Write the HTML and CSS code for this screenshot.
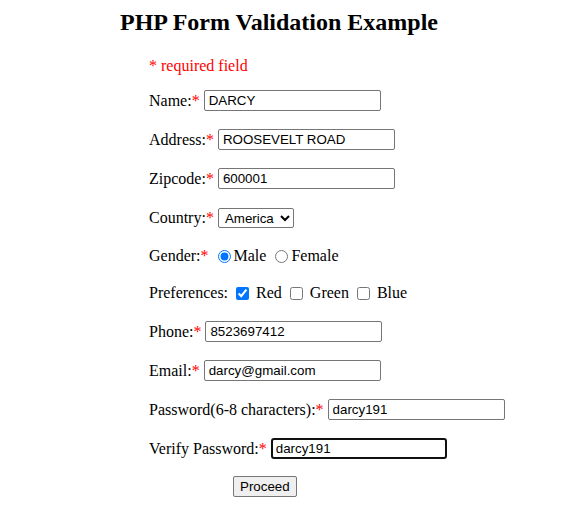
FILE: index.html
```html
<!DOCTYPE html>
<html>
<head>
<meta charset="utf-8">
<title>PHP Form Validation Example</title>
<link rel="stylesheet" href="styles.css">
</head>
<body>
<h2 class="title">PHP Form Validation Example</h2>
<form class="form">
  <p class="note"><span class="err">* required field</span></p>
  <div class="row row-first">Name:<span class="err">*</span> <input class="field" type="text" value="DARCY"></div>
  <div class="row">Address:<span class="err">*</span> <input class="field" type="text" value="ROOSEVELT ROAD"></div>
  <div class="row">Zipcode:<span class="err">*</span> <input class="field" type="text" value="600001"></div>
  <div class="row">Country:<span class="err">*</span> <select class="select"><option>America</option><option>India</option></select></div>
  <div class="row row-gender">Gender:<span class="err">*</span> <input class="radio" type="radio" name="g" checked>Male <input class="radio" type="radio" name="g">Female</div>
  <div class="row row-pref">Preferences: <input class="check" type="checkbox" checked> Red <input class="check" type="checkbox"> Green <input class="check" type="checkbox"> Blue</div>
  <div class="row">Phone:<span class="err">*</span> <input class="field" type="text" value="8523697412"></div>
  <div class="row">Email:<span class="err">*</span> <input class="field" type="text" value="darcy@gmail.com"></div>
  <div class="row">Password(6-8 characters):<span class="err">*</span> <input class="field" type="text" value="darcy191"></div>
  <div class="row">Verify Password:<span class="err">*</span> <input class="field field-focus" type="text" value="darcy191"></div>
  <div class="row row-submit"><button class="btn" type="button">Proceed</button></div>
</form>
</body>
</html>
```
FILE: styles.css
```css
body {
  margin: 0;
  font-family: "Liberation Serif", "Times New Roman", serif;
  font-size: 16px;
  color: #000;
  background: #fff;
}

.title {
  margin: 9px 0 0 120px;
  font-size: 24px;
  font-weight: bold;
}

.form {
  padding-left: 149px;
}

.note {
  margin: 21px 0 0;
}

.err {
  color: #ff0000;
}

.row {
  margin-top: 18px;
  height: 21px;
  line-height: 21px;
  white-space: nowrap;
}

.row-first {
  margin-top: 15px;
}

.row-gender {
  margin-top: 17px;
}

.row-pref {
  margin-top: 16px;
}

.field {
  box-sizing: border-box;
  width: 177px;
  height: 21px;
  margin: 0;
  padding: 1px 4px;
  border: 1px solid #767676;
  border-radius: 2px;
  font-family: "Liberation Sans", Arial, sans-serif;
  font-size: 13.333px;
  color: #000;
  background: #fff;
  vertical-align: top;
}

.field-focus {
  border: 2px solid #101010;
  border-radius: 3px;
  padding: 0 3px;
  width: 176px;
}

.select {
  box-sizing: border-box;
  width: 76px;
  height: 20px;
  margin: 1px 0 0;
  padding: 0 0 0 2px;
  border: 1px solid #767676;
  border-radius: 2px;
  font-family: "Liberation Sans", Arial, sans-serif;
  font-size: 13.333px;
  color: #000;
  background: #fff;
  vertical-align: top;
}

.radio {
  width: 13px;
  height: 13px;
  margin: 5px 3px 0 5px;
  vertical-align: top;
  accent-color: #0075ff;
}

.check {
  width: 13px;
  height: 13px;
  margin: 5px 3px 0 4px;
  vertical-align: top;
  accent-color: #0075ff;
}

.row-submit {
  padding-left: 84px;
  margin-top: 17px;
}

.btn {
  box-sizing: border-box;
  height: 21px;
  padding: 1px 6px;
  border: 1px solid #767676;
  border-radius: 2px;
  background: #efefef;
  font-family: "Liberation Sans", Arial, sans-serif;
  font-size: 13.333px;
  color: #000;
  vertical-align: top;
}
```
